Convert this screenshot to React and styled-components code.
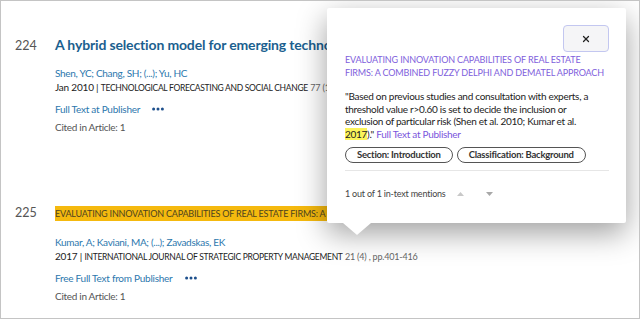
import React from 'react';
import styled, { createGlobalStyle } from 'styled-components';
import { X } from 'lucide-react';

const GlobalStyle = createGlobalStyle`
  html, body {
    margin: 0;
    padding: 0;
    background: #fff;
  }
  body {
    font-family: Lato, "Open Sans", sans-serif;
  }
`;

const Frame = styled.div`
  position: relative;
  box-sizing: border-box;
  width: 640px;
  height: 319px;
  border: 1px solid #c4c4c4;
  overflow: hidden;
  padding: 34px 0 0 14px;
  background: #fff;
`;

const Record = styled.div`
  display: grid;
  grid-template-columns: 40px 1fr;
  align-items: baseline;
  margin-bottom: ${p => p.$gap || 0}px;
`;

const Num = styled.div`
  font-size: 12.5px;
  color: #555;
`;

const Body = styled.div`
  display: flex;
  flex-direction: column;
  white-space: nowrap;
`;

const Title = styled.div`
  height: 20px;
  line-height: 20px;
  font-size: 14px;
  font-weight: 700;
  letter-spacing: -0.15px;
  color: #1b5f8f;
`;

const HighlightTitle = styled.div`
  height: 20px;
  line-height: 20px;
  font-size: 9px;
  letter-spacing: -0.2px;
  color: #4d4420;

  span {
    background: #f5b90e;
    padding: 2px 0;
  }
`;

const Authors = styled.div`
  margin-top: 12px;
  font-size: 10px;
  letter-spacing: -0.3px;
  line-height: 13px;
  color: #2c77ad;
`;

const Source = styled.div`
  font-size: 10px;
  letter-spacing: -0.2px;
  line-height: 14px;
  color: #222;

  small {
    font-size: 8.5px;
    letter-spacing: -0.3px;
  }

  em {
    font-style: normal;
    font-size: 9px;
    color: #666;
  }
`;

const Links = styled.div`
  display: flex;
  align-items: center;
  gap: 12px;
  margin-top: 7px;
  font-size: 10px;
  letter-spacing: -0.25px;
  line-height: 14px;
  color: #2c77ad;
`;

const More = styled.svg`
  display: block;
`;

const Cited = styled.div`
  margin-top: 5px;
  font-size: 10px;
  letter-spacing: -0.3px;
  line-height: 13px;
  color: #555;
`;

const Popover = styled.div`
  position: absolute;
  left: 326px;
  top: 7px;
  width: 299px;
  box-sizing: border-box;
  padding: 17px 17px 23px 18px;
  background: #fff;
  border-radius: 2px;
  box-shadow: 0 10px 30px rgba(0, 0, 0, 0.38);

  &::after {
    content: '';
    position: absolute;
    left: 16px;
    bottom: -12px;
    border-left: 14px solid transparent;
    border-right: 14px solid transparent;
    border-top: 12px solid #fff;
  }
`;

const CloseRow = styled.div`
  display: flex;
  justify-content: flex-end;
`;

const CloseButton = styled.button`
  width: 46px;
  height: 27px;
  display: flex;
  align-items: center;
  justify-content: center;
  padding: 0;
  background: #f5f5f7;
  border: 1px solid #c3c7f0;
  border-radius: 4px;
  color: #222;
`;

const PopTitle = styled.div`
  margin-top: 1px;
  font-size: 9px;
  letter-spacing: -0.15px;
  line-height: 13px;
  color: #8060dc;
  text-transform: uppercase;
  white-space: nowrap;
`;

const Quote = styled.p`
  margin: 11px 0 0;
  font-size: 10px;
  letter-spacing: -0.28px;
  line-height: 12.7px;
  color: #222;
  white-space: nowrap;

  mark {
    background: #fbf35a;
    color: #222;
  }

  a {
    color: #7a55dc;
    text-decoration: none;
  }
`;

const Chips = styled.div`
  display: flex;
  gap: 4px;
  margin-top: 6px;
`;

const Chip = styled.span`
  height: 16px;
  box-sizing: border-box;
  padding: 0 11px;
  display: inline-flex;
  align-items: center;
  border: 1px solid #555;
  border-radius: 9px;
  font-size: 9.5px;
  letter-spacing: -0.25px;
  font-weight: 700;
  color: #333;
`;

const Divider = styled.hr`
  margin: 7px 0 0;
  border: 0;
  border-top: 1px solid #e6e6e6;
`;

const Pager = styled.div`
  display: flex;
  align-items: center;
  margin-top: 17px;
  font-size: 9px;
  letter-spacing: -0.2px;
  line-height: 12px;
  color: #444;
`;

const Arrow = styled.svg`
  display: block;
  margin-left: ${p => p.$ml}px;
`;

function Dots() {
  return (
    <More width="12" height="4" viewBox="0 0 12 4">
      <circle cx="1.6" cy="2" r="1.5" fill="#1d4f8c" />
      <circle cx="6" cy="2" r="1.5" fill="#1d4f8c" />
      <circle cx="10.4" cy="2" r="1.5" fill="#1d4f8c" />
    </More>
  );
}

export default function App() {
  return (
    <>
      <GlobalStyle />
      <Frame>
        <Record $gap={70}>
          <Num>224</Num>
          <Body>
            <Title>A hybrid selection model for emerging technology</Title>
            <Authors>Shen, YC; Chang, SH; (...); Yu, HC</Authors>
            <Source>
              Jan 2010 | <small>TECHNOLOGICAL FORECASTING AND SOCIAL CHANGE</small> <em>77 (1)</em>
            </Source>
            <Links>
              <span>Full Text at Publisher</span>
              <Dots />
            </Links>
            <Cited>Cited in Article: 1</Cited>
          </Body>
        </Record>
        <Record>
          <Num>225</Num>
          <Body>
            <HighlightTitle>
              <span>EVALUATING INNOVATION CAPABILITIES OF REAL ESTATE FIRMS: A COMBINED FUZZY DELPHI AND DEMATEL APPROACH</span>
            </HighlightTitle>
            <Authors>Kumar, A; Kaviani, MA; (...); Zavadskas, EK</Authors>
            <Source>
              2017 | <small>INTERNATIONAL JOURNAL OF STRATEGIC PROPERTY MANAGEMENT</small> <em>21 (4) , pp.401-416</em>
            </Source>
            <Links>
              <span>Free Full Text from Publisher</span>
              <Dots />
            </Links>
            <Cited>Cited in Article: 1</Cited>
          </Body>
        </Record>

        <Popover>
          <CloseRow>
            <CloseButton aria-label="Close">
              <X size={10} strokeWidth={3} />
            </CloseButton>
          </CloseRow>
          <PopTitle>
            Evaluating innovation capabilities of real estate
            <br />
            firms: a combined fuzzy delphi and dematel approach
          </PopTitle>
          <Quote>
            "Based on previous studies and consultation with experts, a
            <br />
            threshold value r&gt;0.60 is set to decide the inclusion or
            <br />
            exclusion of particular risk (Shen et al. 2010; Kumar et al.
            <br />
            <mark>2017</mark>)." <a href="#">Full Text at Publisher</a>
          </Quote>
          <Chips>
            <Chip>Section: Introduction</Chip>
            <Chip>Classification: Background</Chip>
          </Chips>
          <Divider />
          <Pager>
            <span>1 out of 1 in-text mentions</span>
            <Arrow $ml={11} width="7" height="4" viewBox="0 0 7 4">
              <path d="M0 4 L3.5 0 L7 4 Z" fill="#c8c8c8" />
            </Arrow>
            <Arrow $ml={22} width="7" height="4" viewBox="0 0 7 4">
              <path d="M0 0 L3.5 4 L7 0 Z" fill="#a8a8a8" />
            </Arrow>
          </Pager>
        </Popover>
      </Frame>
    </>
  );
}
